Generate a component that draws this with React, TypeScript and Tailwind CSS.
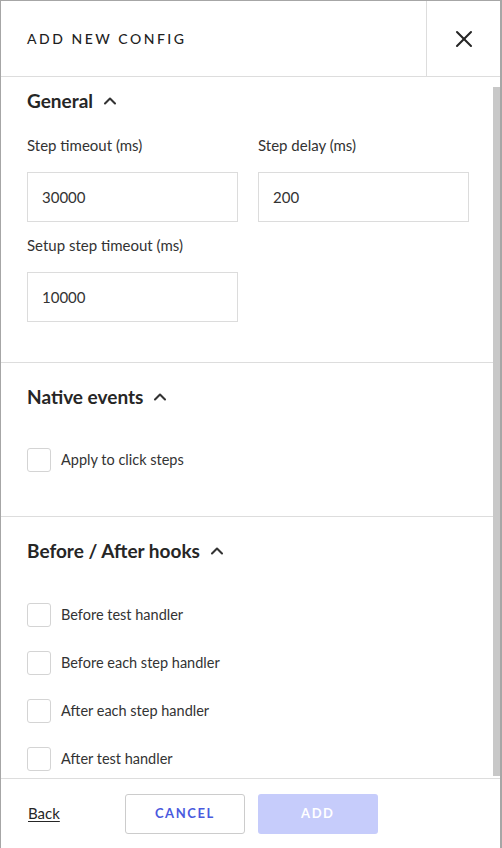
import { ChevronUp, X } from 'lucide-react'

// ─── Form pieces ──────────────────────────────────────────────────────────────

function SectionTitle({ children }: { children: string }) {
  return (
    <div className="flex items-center h-6">
      <h2 className="text-[19px] font-bold text-[#262626] leading-6">{children}</h2>
      <ChevronUp size={20} strokeWidth={2.5} className="ml-[7px] text-[#333]" />
    </div>
  )
}

function Field({ label, value }: { label: string; value: string }) {
  return (
    <div className="flex flex-col">
      <label className="text-[15px] leading-5 text-[#333]">{label}</label>
      <input
        defaultValue={value}
        className="mt-[17px] h-[50px] w-full border border-[#dcdcdc] px-[14px] text-[15px] text-[#333] outline-none"
      />
    </div>
  )
}

function Check({ label }: { label: string }) {
  return (
    <label className="flex items-center h-6 gap-[10px]">
      <span className="w-6 h-6 rounded-[3px] border border-[#d4d4d4] bg-white" />
      <span className="text-[14.5px] text-[#333]">{label}</span>
    </label>
  )
}

const HOOKS = [
  'Before test handler',
  'Before each step handler',
  'After each step handler',
  'After test handler',
]

// ─── Panel ────────────────────────────────────────────────────────────────────

export default function App() {
  return (
    <div
      className="h-[848px] w-[502px] flex flex-col bg-white border-l border-t border-r-2 border-[#a6a6a6] overflow-hidden"
      style={{ fontFamily: 'Lato, "Open Sans", sans-serif' }}
    >
      {/* Header */}
      <header className="flex h-[76px] shrink-0 border-b border-[#dddddd]">
        <div className="flex-1 flex items-center pl-[26px]">
          <span className="text-[14px] font-medium tracking-[0.18em] text-[#1f1f1f]">ADD NEW CONFIG</span>
        </div>
        <button className="w-[74px] flex items-center justify-center border-l border-[#dddddd] text-[#262626]">
          <X size={28} strokeWidth={1.75} />
        </button>
      </header>

      {/* Scrollable body, with its thin scrollbar thumb laid over the right edge */}
      <div className="relative flex-1 min-h-0">
        <div className="h-full overflow-y-auto [&::-webkit-scrollbar]:w-0 pr-[7px]">
          <section className="px-[26px] pt-3 pb-10 border-b border-[#dddddd]">
            <SectionTitle>General</SectionTitle>
            <div className="mt-[22px] grid grid-cols-[211px_211px] gap-x-5 gap-y-[13px]">
              <Field label="Step timeout (ms)" value="30000" />
              <Field label="Step delay (ms)" value="200" />
              <Field label="Setup step timeout (ms)" value="10000" />
            </div>
          </section>

          <section className="px-[26px] pt-[22px] pb-[44px] border-b border-[#dddddd]">
            <SectionTitle>Native events</SectionTitle>
            <div className="mt-[39px]">
              <Check label="Apply to click steps" />
            </div>
          </section>

          <section className="px-[26px] pt-[22px] pb-5">
            <SectionTitle>Before / After hooks</SectionTitle>
            <div className="mt-10 flex flex-col gap-6">
              {HOOKS.map((h) => (
                <Check key={h} label={h} />
              ))}
            </div>
          </section>
        </div>
        <div className="absolute right-0 top-[10px] bottom-[2px] w-[7px] bg-[#c8c8c8]" />
      </div>

      {/* Footer */}
      <footer className="h-[70px] shrink-0 flex items-center border-t border-[#dddddd] pl-[27px]">
        <a href="#" className="text-[15px] text-[#262626] underline underline-offset-2">Back</a>
        <button className="ml-[65px] w-[120px] h-10 rounded-[3px] border border-[#cccccc] bg-white text-[13px] font-bold tracking-[0.12em] text-[#4a5ade]">
          CANCEL
        </button>
        <button className="ml-[13px] w-[120px] h-10 rounded-[3px] bg-[#c6ccfb] text-[13px] font-bold tracking-[0.12em] text-white">
          ADD
        </button>
      </footer>
    </div>
  )
}
